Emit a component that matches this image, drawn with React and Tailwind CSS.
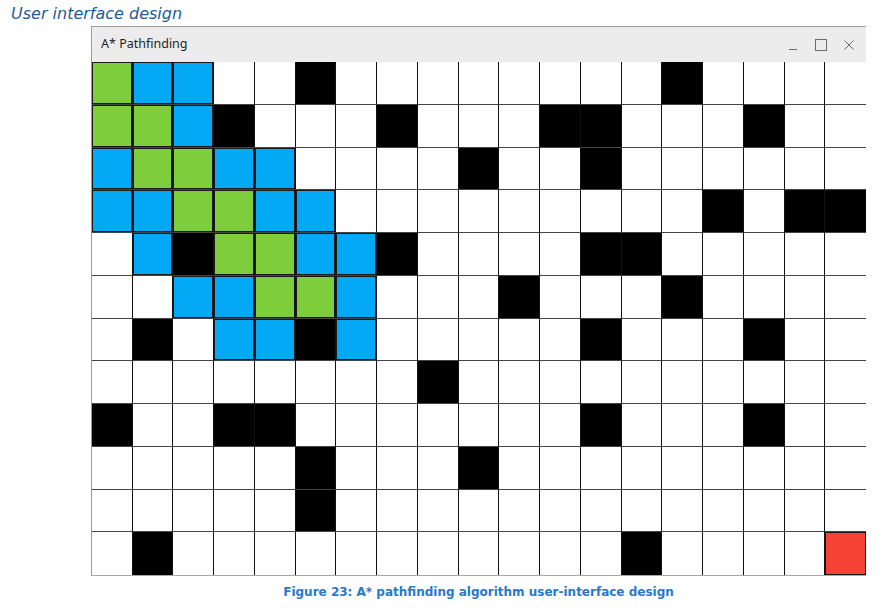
import React from "react";

const rows = [
  "gbb..#........#....",
  "ggb#...#...##...#..",
  "bggbb....#..#......",
  "bbggbb.........#.##",
  ".b#ggbb#....##.....",
  "..bbggb...#...#....",
  ".#.bb#b.....#...#..",
  "........#..........",
  "#..##.......#...#..",
  ".....#...#.........",
  ".....#.............",
  ".#...........#....r",
];

const fill = {
  ".": "bg-white",
  "#": "bg-black",
  g: "bg-[#7ecd3b] shadow-[inset_0_0_0_1px_#1a1a1a]",
  b: "bg-[#03a9f4] shadow-[inset_0_0_0_1px_#1a1a1a]",
  r: "bg-[#f44336] shadow-[inset_0_0_0_1px_#1a1a1a]",
};

const App = () => {
  return (
    <div className="relative h-[613px] w-[895px] overflow-hidden bg-white font-['DejaVu_Sans',sans-serif]">
      <p className="pl-[11px] pt-[4px] text-[16px] leading-[20px] italic text-[#1d5b98]">
        User interface design
      </p>
      <div className="ml-[91px] mt-[2px] w-[775px] border-l border-t border-[#9c9c9c]">
        <div className="flex h-[35px] items-center justify-between bg-[#ececec] pl-[9px] pr-[12px]">
          <span className="font-['Noto_Sans',sans-serif] text-[12.5px] text-[#1e1e1e]">
            A* Pathfinding
          </span>
          <div className="flex items-center gap-[17px] text-[#6b6b6b]">
            <svg width="9" height="12" viewBox="0 0 9 12">
              <line x1="0" y1="10.5" x2="8" y2="10.5" stroke="currentColor" strokeWidth="1" />
            </svg>
            <svg width="12" height="12" viewBox="0 0 12 12">
              <rect x="0.5" y="0.5" width="11" height="11" fill="none" stroke="currentColor" strokeWidth="1" />
            </svg>
            <svg width="10" height="10" viewBox="0 0 10 10">
              <path d="M0.5 0.5 L9.5 9.5 M9.5 0.5 L0.5 9.5" stroke="currentColor" strokeWidth="1" />
            </svg>
          </div>
        </div>
        <div className="grid h-[514px] w-[774px] grid-cols-[repeat(19,1fr)] grid-rows-[repeat(12,1fr)] border-b border-[#a8a8a8]">
          {rows.map((row, r) =>
            row.split("").map((c, i) => (
              <div
                key={`${r}-${i}`}
                className={`${fill[c]} ${i < 18 ? "border-r border-r-[#111]" : ""} ${
                  r < 11 ? "border-b border-b-[#444]" : ""
                }`}
              />
            ))
          )}
        </div>
      </div>
      <p className="mt-[9px] pl-[62px] text-center text-[12px] leading-[15px] font-bold text-[#2a78cc]">
        Figure 23: A* pathfinding algorithm user-interface design
      </p>
    </div>
  );
};

export default App;
